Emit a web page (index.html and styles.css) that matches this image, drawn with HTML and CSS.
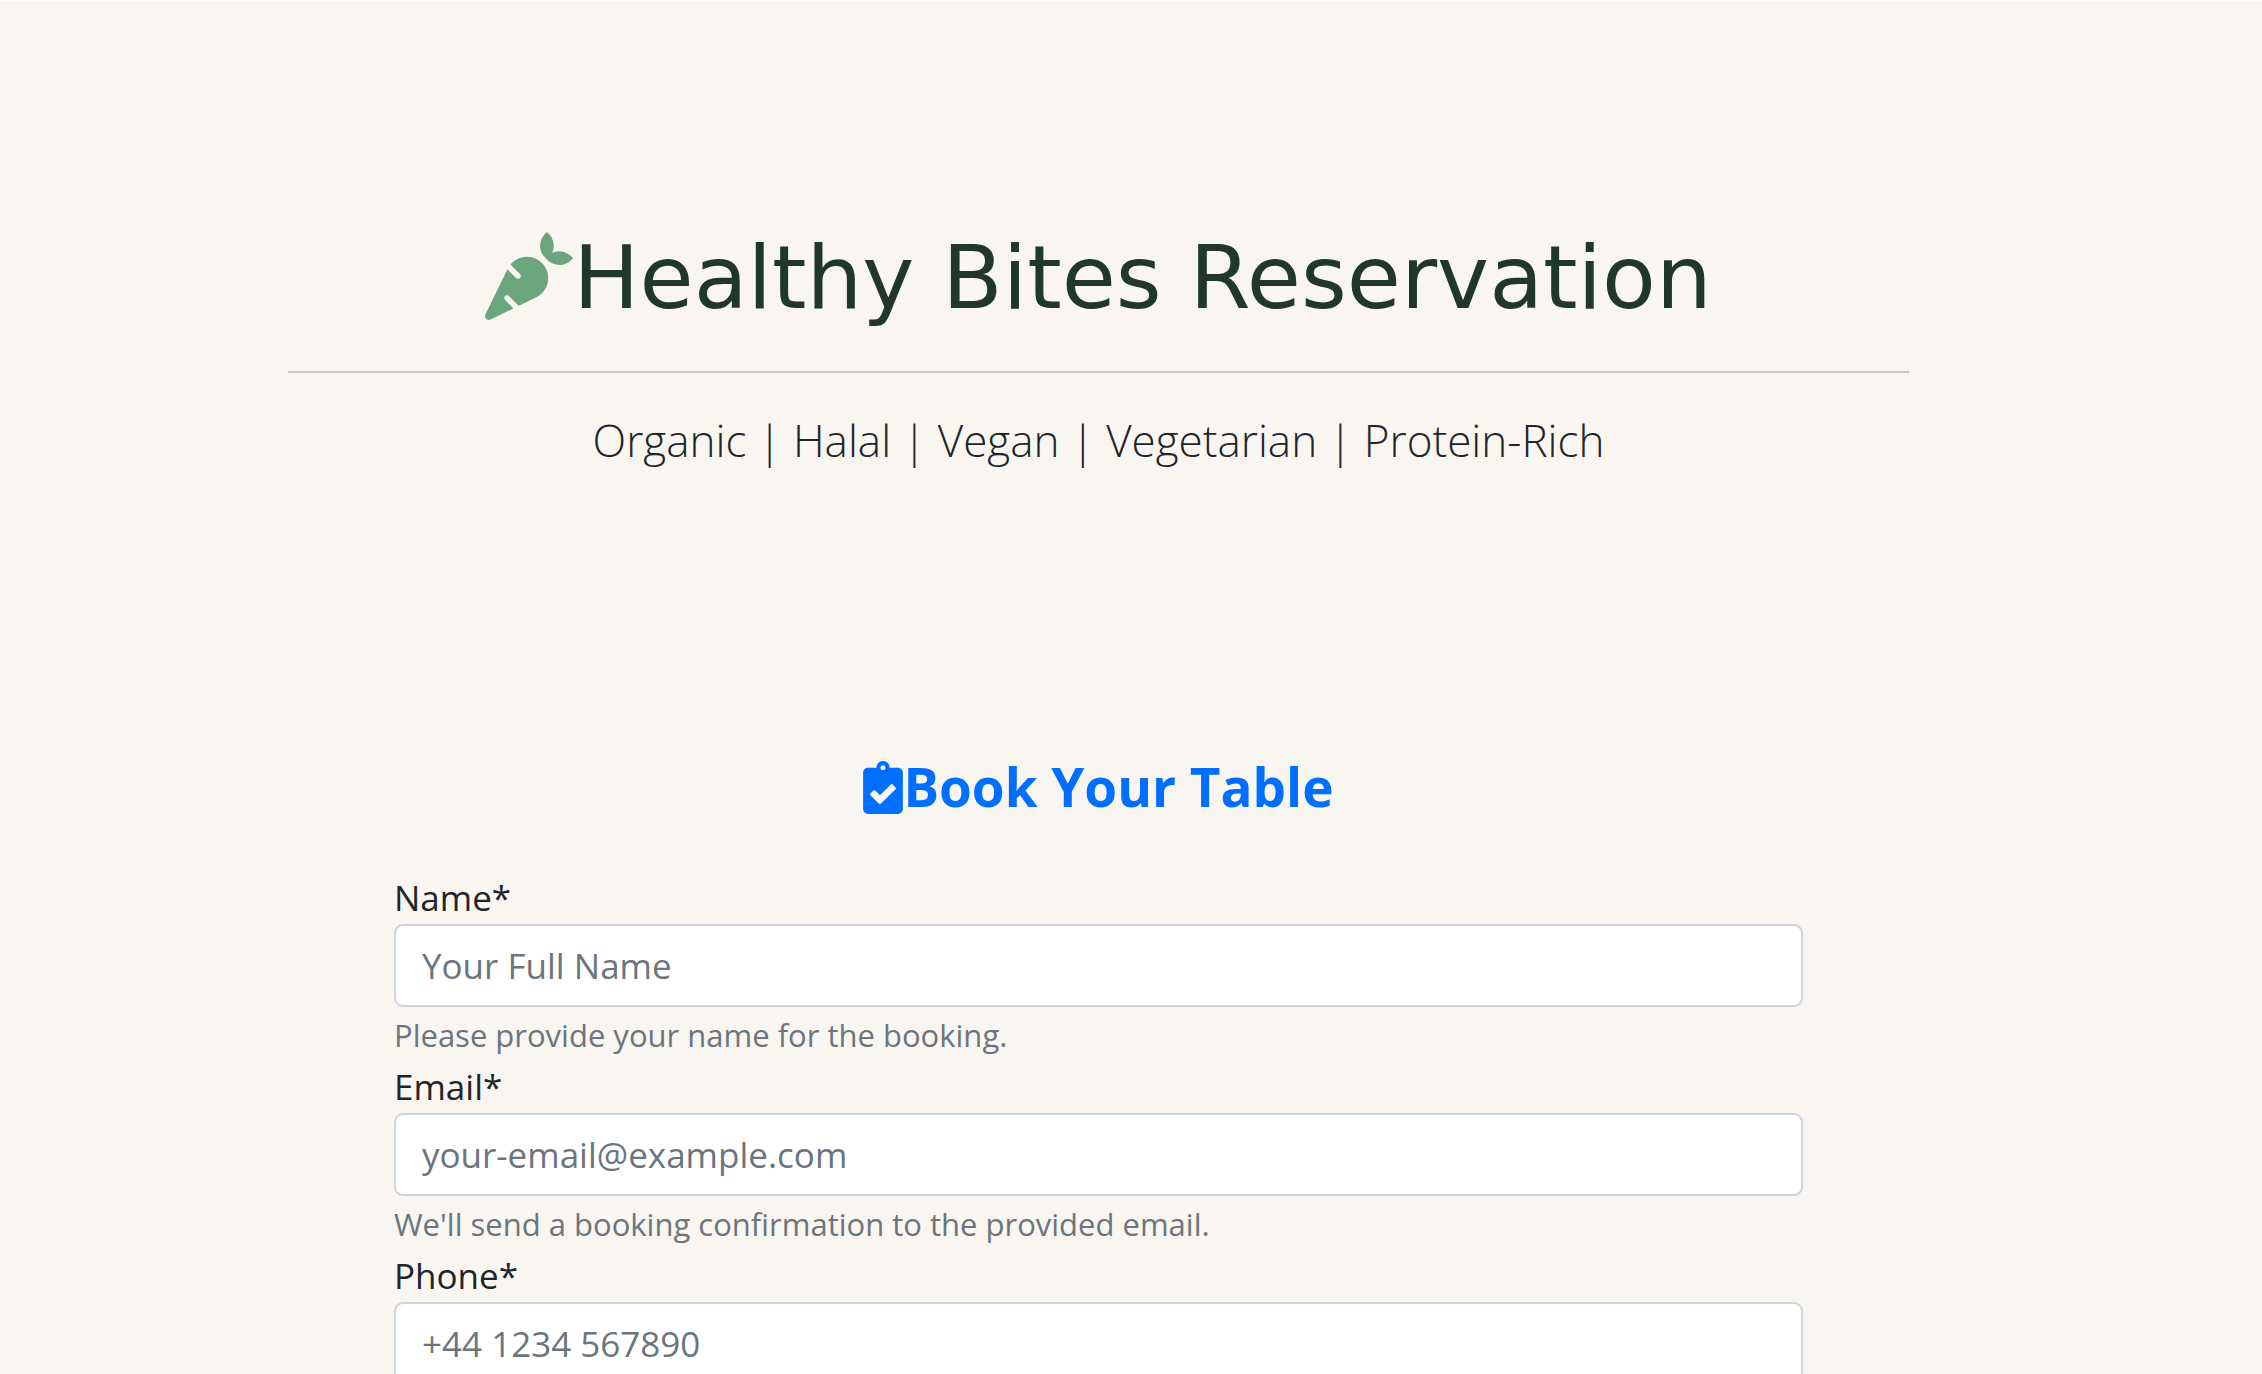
FILE: index.html
```html
<!DOCTYPE html>
<html lang="en">
<head>
<meta charset="utf-8">
<meta name="viewport" content="width=device-width, initial-scale=1">
<title>Healthy Bites Reservation</title>
<link rel="stylesheet" href="styles.css">
</head>
<body>
<main class="container">
  <header class="hero">
    <h1 class="hero-title">
      <svg class="icon-carrot" viewBox="0 0 512 512" aria-hidden="true"><path d="M298.2 156.6c-52.7-25.7-114.5-10.5-150.2 32.8l55.2 55.2c6.3 6.3 6.3 16.4 0 22.6-3.1 3.1-7.2 4.7-11.3 4.7s-8.2-1.6-11.3-4.7L130.4 217 2.3 479.7c-2.9 6-3.1 13.3 0 19.7 5.4 11.1 18.9 15.7 30 10.3l133.6-65.2-49.2-49.2c-6.3-6.2-6.3-16.4 0-22.6 6.3-6.2 16.4-6.2 22.6 0l57 57 102-49.8c24-11.7 44.5-31.3 57.1-57.1 30.1-61.7 4.5-136.1-57.2-166.2zm92.1-34.9C409.8 81 399.7 32.9 360 0c-50.3 41.7-52.5 107.5-7.9 151.9l8 8c44.4 44.6 110.3 42.4 151.9-7.9-32.9-39.7-81-49.8-121.7-30.3z"/></svg>
      <span class="hero-text">Healthy Bites Reservation</span>
    </h1>
    <hr class="divider">
    <p class="lead">Organic | Halal | Vegan | Vegetarian | Protein-Rich</p>
  </header>
  <section class="booking">
    <h2 class="booking-title">
      <svg class="icon-clipboard" viewBox="0 0 384 512" aria-hidden="true"><path d="M336 64h-80c0-35.300-28.700-64-64-64s-64 28.700-64 64H48C21.500 64 0 85.500 0 112v352c0 26.500 21.500 48 48 48h288c26.500 0 48-21.500 48-48V112c0-26.500-21.500-48-48-48zM192 40c13.300 0 24 10.700 24 24s-10.700 24-24 24-24-10.700-24-24 10.700-24 24-24zm121.200 231.800l-143 141.800c-4.700 4.700-12.300 4.600-17-.1l-82.600-83.300c-4.700-4.700-4.600-12.300.1-17L99.100 285c4.700-4.700 12.300-4.600 17 .1l46 46.400 106-105.200c4.700-4.700 12.300-4.600 17 .1l28.200 28.400c4.700 4.800 4.600 12.300-.1 17z"/></svg>
      <span>Book Your Table</span>
    </h2>
    <form>
      <div class="field">
        <label for="name">Name*</label>
        <input class="control" id="name" type="text" placeholder="Your Full Name" aria-describedby="name-help" required>
        <small class="help" id="name-help">Please provide your name for the booking.</small>
      </div>
      <div class="field">
        <label for="email">Email*</label>
        <input class="control" id="email" type="email" placeholder="your-email@example.com" aria-describedby="email-help" required>
        <small class="help" id="email-help">We'll send a booking confirmation to the provided email.</small>
      </div>
      <div class="field">
        <label for="phone">Phone*</label>
        <input class="control" id="phone" type="tel" placeholder="+44 1234 567890" required>
      </div>
    </form>
  </section>
</main>
</body>
</html>
```
FILE: styles.css
```css
* {
  box-sizing: border-box;
}

body {
  margin: 0;
  padding-right: 65px;
  border-top: 2px solid #fff;
  background: #f9f6f1;
  color: #212529;
  font-family: "Open Sans", sans-serif;
  font-size: 35px;
  line-height: 53px;
}

.container {
  max-width: 1621px;
  margin: 0 auto;
  padding: 219px 0 0;
}

.hero {
  text-align: center;
}

.hero-title,
.booking-title {
  display: flex;
  justify-content: center;
  align-items: center;
  margin: 0;
}

.hero-title {
  color: #22372b;
  font-family: Verdana, "DejaVu Sans", sans-serif;
  font-size: 88px;
  font-weight: 400;
  line-height: 106px;
}

.hero-text {
  padding-top: 4px;
}

.icon-carrot {
  flex: none;
  width: 88px;
  height: 88px;
  fill: #6aa57c;
}

.divider {
  height: 2px;
  margin: 40px 0 34px;
  border: 0;
  background: #c7c5c1;
}

.lead {
  margin: 0;
  font-size: 44px;
  font-weight: 300;
  line-height: 66px;
}

.booking {
  padding: 282px 106px 0;
}

.booking-title {
  margin-bottom: 52px;
  color: #006eff;
  font-size: 53px;
  font-weight: 700;
  line-height: 64px;
}

.icon-clipboard {
  flex: none;
  width: 40px;
  height: 53px;
  fill: currentColor;
}

.field label,
.help {
  display: block;
}

.control {
  display: block;
  width: 100%;
  height: 83px;
  padding: 0 26px;
  border: 2px solid #ced4da;
  border-radius: 9px;
  background: #fff;
  color: #495057;
  font: inherit;
}

.control::placeholder {
  color: #6c757d;
  opacity: 1;
}

.help {
  padding-top: 4px;
  color: #6c757d;
  font-size: 31px;
  line-height: 49px;
}
```
